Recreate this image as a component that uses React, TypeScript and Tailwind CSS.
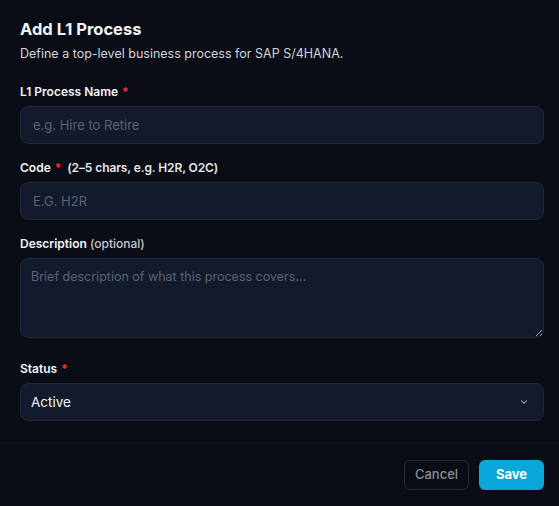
import React from 'react';

const Req = () => <span className="text-red-500 ml-1">*</span>;

export default function App() {
  return (
    <div className="w-[559px] h-[506px] bg-[#0a0d15] text-white overflow-hidden" style={{ fontFamily: 'Inter, "Noto Sans", sans-serif' }}>
      <div className="pl-5 pr-[15px] pt-[15px]">
        <h2 className="text-[16.5px] leading-7 font-bold text-[#f3f4f6]">Add L1 Process</h2>
        <p className="text-[12.5px] leading-5 text-[#d1d5db] mt-[1px]">Define a top-level business process for SAP S/4HANA.</p>

        <div className="mt-[20px] flex flex-col">
          <label className="text-[12px] leading-4 font-semibold text-[#f3f4f6]">
            L1 Process Name<Req />
          </label>
          <input
            placeholder="e.g. Hire to Retire"
            className="mt-1.5 h-[38px] w-full rounded-lg border border-[#1f2739] bg-[#131a2b] px-3 text-[13px] text-white placeholder:text-[#5b6475] outline-none"
          />

          <label className="mt-4 text-[12px] leading-4 font-semibold text-[#f3f4f6]">
            Code<Req /><span className="ml-1.5 tracking-[-0.1px] text-[#e5e7eb]">(2–5 chars, e.g. H2R, O2C)</span>
          </label>
          <input
            placeholder="E.G. H2R"
            className="mt-1.5 h-[38px] w-full rounded-lg border border-[#1f2739] bg-[#131a2b] px-3 text-[13px] text-white placeholder:text-[#5b6475] outline-none"
          />

          <label className="mt-4 text-[12px] leading-4 font-semibold text-[#f3f4f6]">
            Description <span className="font-medium text-[#c4c9d2]">(optional)</span>
          </label>
          <textarea
            placeholder="Brief description of what this process covers..."
            className="mt-1.5 block h-[80px] w-full rounded-lg border border-[#1f2739] bg-[#131a2b] px-2.5 py-2 text-[12.5px] leading-5 text-white placeholder:text-[#5b6475] outline-none resize-y"
          />

          <label className="mt-[23px] text-[12px] leading-4 font-semibold text-[#f3f4f6]">
            Status<Req />
          </label>
          <div className="mt-1.5 h-[38px] w-full rounded-lg border border-[#1f2739] bg-[#131a2b] pl-2.5 pr-3.5 flex items-center justify-between">
            <span className="text-[13.5px] text-[#f3f4f6]">Active</span>
            <svg width="10" height="10" viewBox="0 0 24 24" fill="none" stroke="#7b8494" strokeWidth="3" strokeLinecap="round" strokeLinejoin="round">
              <path d="M6 9l6 6 6-6" />
            </svg>
          </div>
        </div>
      </div>

      <div className="mt-[22px] border-t border-[#161b27] pl-5 pr-[15px] pt-4 flex justify-end gap-[10px]">
        <button className="h-[30px] w-[65px] rounded-md border border-[#262d3a] text-[13px] font-medium text-[#858d9b]">
          Cancel
        </button>
        <button className="h-[30px] w-[65px] rounded-md bg-[#08a9da] text-[13px] font-bold text-white">
          Save
        </button>
      </div>
    </div>
  );
}
